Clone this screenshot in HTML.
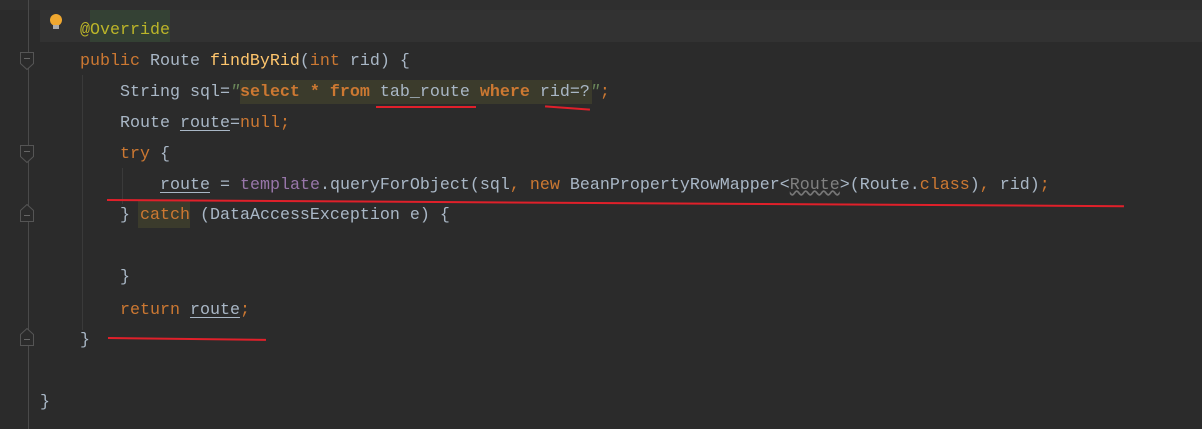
<!DOCTYPE html>
<html><head><meta charset="utf-8"><style>
html,body{margin:0;padding:0;width:1202px;height:429px;overflow:hidden;background:#2b2b2b}
.code{position:absolute;left:0;top:0;font-family:"Liberation Mono",monospace;font-size:16.67px;color:#a9b7c6}
.l{position:absolute;white-space:pre;height:31px;line-height:31px}
.k{color:#cc7832}.s{color:#6a8759;font-style:italic}.a{color:#bbb529}.f{color:#ffc66d}.p{color:#9876aa}
.u{text-decoration:underline;text-underline-offset:3px}
.sb{color:#cc7832;font-weight:bold}
.red{position:absolute;background:#e0202a;height:2px}
.fold{position:absolute;left:20px;width:14px;height:18px}
</style></head><body>
<div style="position:absolute;left:0;top:0;width:1202px;height:10px;background:#2f2f2f"></div>
<div style="position:absolute;left:40px;top:10px;width:1162px;height:32px;background:#323232"></div>
<div style="position:absolute;left:90px;top:10px;width:80px;height:32px;background:#344134"></div>
<div style="position:absolute;left:28px;top:0;width:1px;height:429px;background:#4a4a4a"></div>
<div style="position:absolute;left:82px;top:75px;width:1px;height:255px;background:#3a3a3a"></div>
<div style="position:absolute;left:122px;top:168px;width:1px;height:36px;background:#3a3a3a"></div>
<div style="position:absolute;left:240px;top:80px;width:352px;height:24px;background:#3b3b2c"></div>
<div style="position:absolute;left:138px;top:200px;width:52px;height:28px;background:#3b3b2c"></div>
<svg class="fold" style="top:52px" viewBox="0 0 14 18"><path d="M0.5 0.5H13.5V11.5L7 17.5L0.5 11.5Z" fill="#2b2b2b" stroke="#555"/><path d="M4 6.5H10" stroke="#666"/></svg>
<svg class="fold" style="top:145px" viewBox="0 0 14 18"><path d="M0.5 0.5H13.5V11.5L7 17.5L0.5 11.5Z" fill="#2b2b2b" stroke="#555"/><path d="M4 6.5H10" stroke="#666"/></svg>
<svg class="fold" style="top:204px" viewBox="0 0 14 18"><path d="M0.5 17.5H13.5V6.5L7 0.5L0.5 6.5Z" fill="#2b2b2b" stroke="#555"/><path d="M4 11.5H10" stroke="#666"/></svg>
<svg class="fold" style="top:328px" viewBox="0 0 14 18"><path d="M0.5 17.5H13.5V6.5L7 0.5L0.5 6.5Z" fill="#2b2b2b" stroke="#555"/><path d="M4 11.5H10" stroke="#666"/></svg>
<div style="position:absolute;left:50px;top:14px;width:12px;height:12px;border-radius:6px;background:#f0a830"></div>
<div style="position:absolute;left:53px;top:25px;width:6px;height:4px;background:#aaa"></div>
<div class="code">
<div class="l" style="left:80px;top:15px"><span class="a">@Override</span></div>
<div class="l" style="left:80px;top:46px"><span class="k">public</span> Route <span class="f">findByRid</span>(<span class="k">int</span> rid) {</div>
<div class="l" style="left:120px;top:77px">String sql=<span class="s">"</span><span class="sb">select * from</span> tab_route <span class="sb">where</span> rid=?<span class="s">"</span><span class="k">;</span></div>
<div class="l" style="left:120px;top:108px">Route <span class="u">route</span>=<span class="k">null;</span></div>
<div class="l" style="left:120px;top:139px"><span class="k">try</span> {</div>
<div class="l" style="left:160px;top:170px"><span class="u">route</span> = <span class="p">template</span>.queryForObject(sql<span class="k">,</span> <span class="k">new</span> BeanPropertyRowMapper&lt;<span style="color:#808080;text-decoration:underline wavy #777">Route</span>&gt;(Route.<span class="k">class</span>)<span class="k">,</span> rid)<span class="k">;</span></div>
<div class="l" style="left:120px;top:200px">} <span class="k">catch</span> (DataAccessException e) {</div>
<div class="l" style="left:120px;top:262px">}</div>
<div class="l" style="left:120px;top:295px"><span class="k">return</span> <span class="u">route</span><span class="k">;</span></div>
<div class="l" style="left:80px;top:325px">}</div>
<div class="l" style="left:40px;top:387px">}</div>
</div>
<div class="red" style="left:376px;top:106px;width:100px"></div>
<div class="red" style="left:545px;top:107px;width:45px;transform:rotate(4deg)"></div>
<div class="red" style="left:107px;top:199px;width:1017px;transform:rotate(0.35deg);transform-origin:left"></div>
<div class="red" style="left:108px;top:337px;width:158px;transform:rotate(0.7deg);transform-origin:left"></div>
</body></html>
